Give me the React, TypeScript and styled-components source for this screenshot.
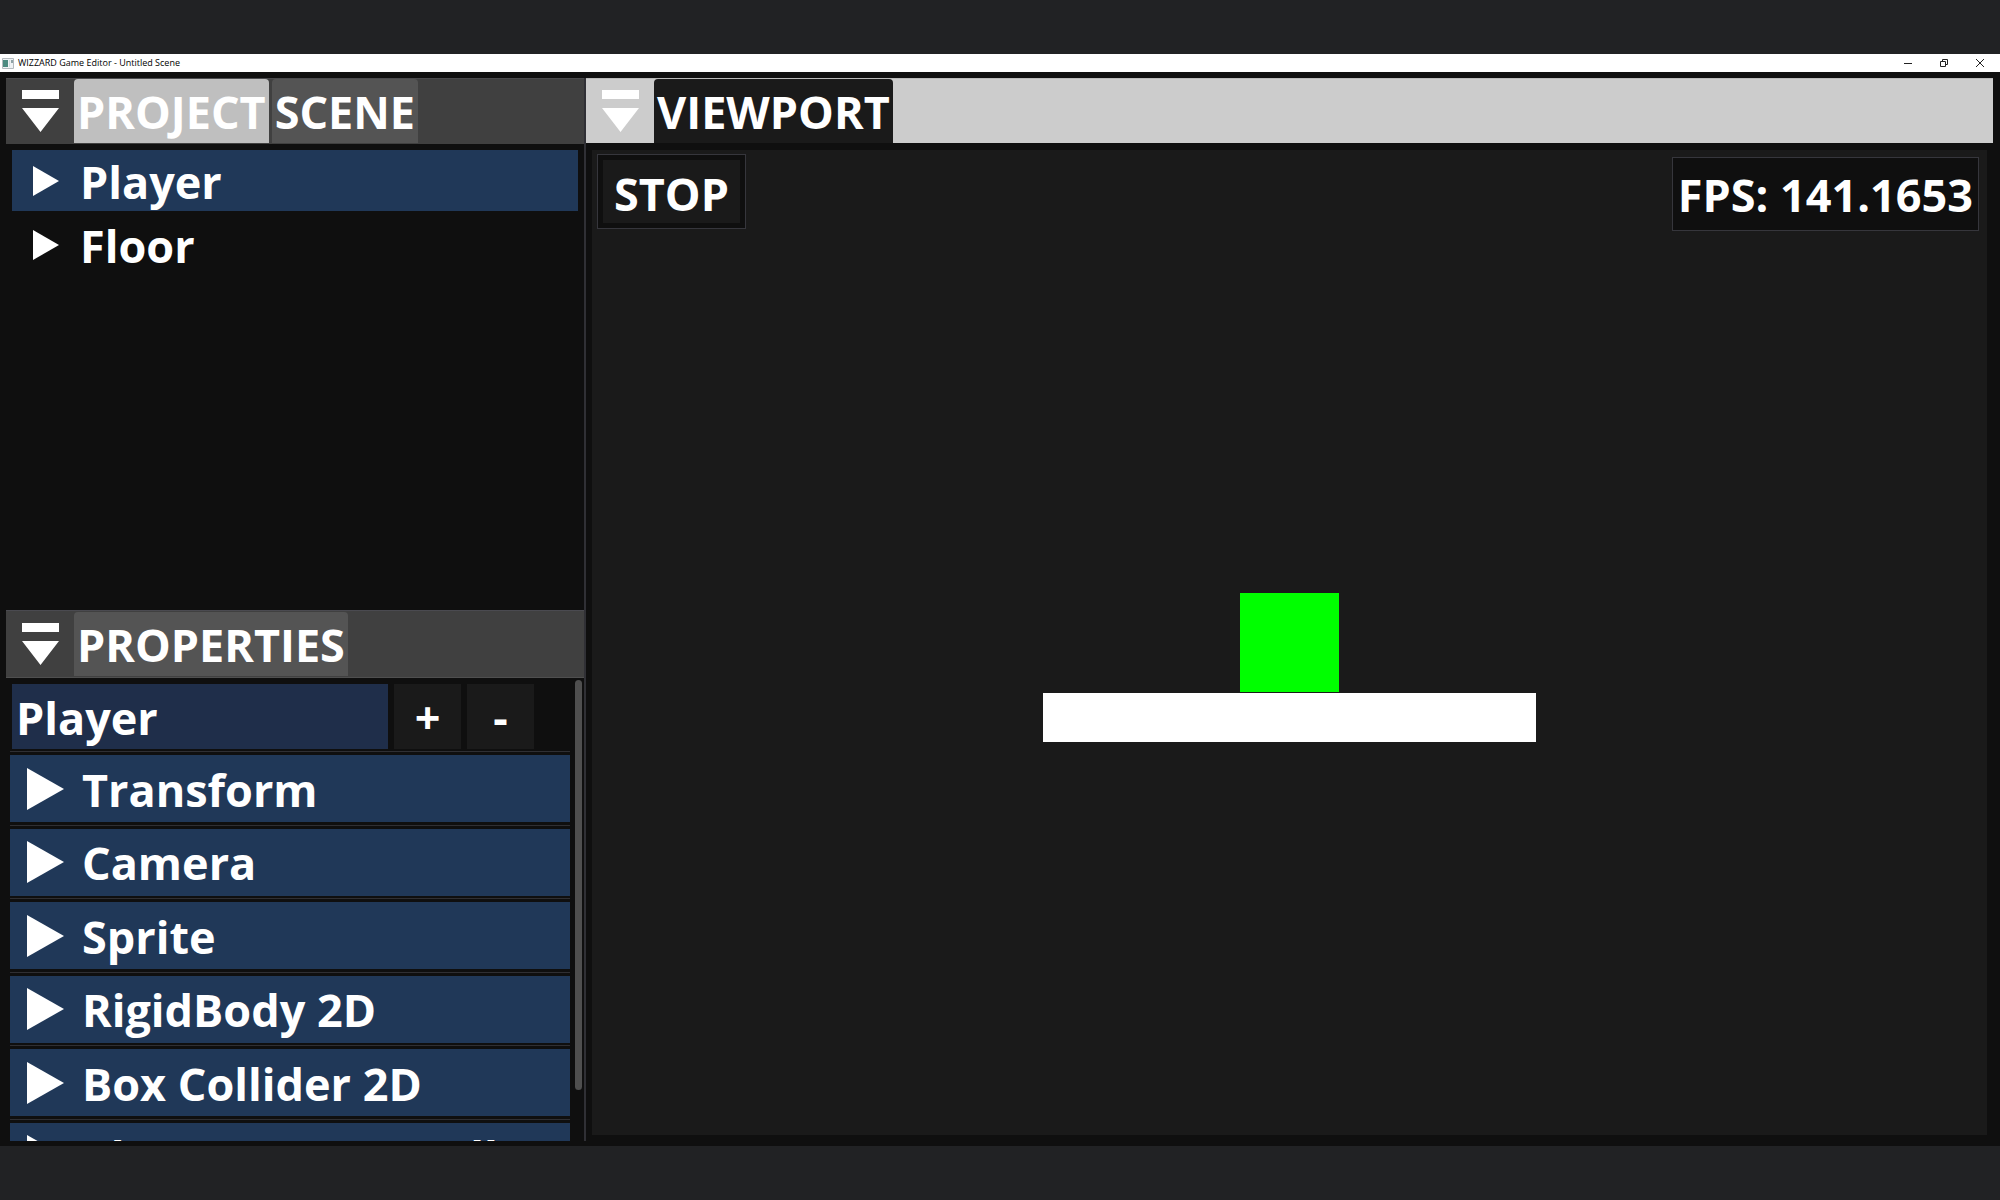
import React, { useState } from "react";
import styled, { createGlobalStyle, css } from "styled-components";

const GlobalStyle = createGlobalStyle`
  *, *::before, *::after { box-sizing: border-box; }
  body { margin: 0; background: #212224; }
  button, input { font: inherit; color: inherit; border: 0; border-radius: 0; padding: 0; margin: 0; background: none; }
`;

const Desktop = styled.div`
  display: flex;
  flex-direction: column;
  height: 100vh;
  padding: 54px 0;
  background: #212224;
  color: #fff;
  font: 700 45px/60px "Open Sans", "Noto Sans", sans-serif;
`;

const Window = styled.main`
  display: flex;
  flex: 1;
  flex-direction: column;
  min-height: 0;
  background: #0f0f0f;
`;

const TitleBar = styled.header`
  display: flex;
  align-items: center;
  height: 18px;
  padding: 0 10px 0 2px;
  gap: 4px;
  background: #fff;
  color: #000;
`;

const Title = styled.h1`
  flex: 1;
  margin: 0;
  font-size: 9px;
  font-weight: 400;
  line-height: 18px;
`;

const WindowButton = styled.button`
  display: flex;
  align-items: center;
  justify-content: center;
  width: 20px;
  height: 18px;
`;

const WindowButtons = styled.div`
  display: flex;
  gap: 16px;
`;

const Workspace = styled.div`
  display: grid;
  flex: 1;
  grid-template-columns: minmax(0, 580fr) minmax(0, 1407fr);
  min-height: 0;
  padding: 6px 7px 5px 6px;
`;

const Sidebar = styled.aside`
  display: grid;
  grid-template-rows: 532fr 531fr;
  min-height: 0;
  border-right: 2px solid #303035;
`;

const Panel = styled.section`
  display: flex;
  flex-direction: column;
  min-width: 0;
  min-height: 0;
`;

const barKinds = {
  dark: css`
    height: 66px;
    padding-bottom: 1px;
    border-top: 1px solid #4a4a4d;
    background: #404040;
  `,
  tall: css`
    height: 68px;
    padding-bottom: 1px;
    border-top: 1px solid #4a4a50;
    border-bottom: 1px solid #4f4f4f;
    background: #404040;
  `,
  light: css`
    height: 65px;
    border-top: 1px solid #b8b8b8;
    background: #cccccc;
  `,
};

const TabBar = styled.div<{ $kind: keyof typeof barKinds }>`
  display: flex;
  flex: none;
  align-items: flex-end;
  ${(p) => barKinds[p.$kind]}
`;

const MenuButton = styled.button`
  display: flex;
  align-items: center;
  width: 68px;
  height: 64px;
  padding-left: 16px;
`;

const tabColors = {
  selected: "#bfbfbf",
  idle: "#545454",
  dark: "#1a1a1a",
};

const Tab = styled.button<{ $tone: keyof typeof tabColors }>`
  height: 64px;
  margin-right: 3px;
  padding: 2px 3px 0;
  border-radius: 4px 4px 0 0;
  background: ${(p) => tabColors[p.$tone]};
  line-height: 62px;
`;

const Tree = styled.div`
  display: flex;
  flex-direction: column;
  gap: 3px;
  padding: 6px;
`;

const rowBase = css`
  display: flex;
  align-items: center;
  width: 100%;
  text-align: left;
`;

const RowLabel = styled.span`
  padding-top: 2px;
`;

const TreeRow = styled.button<{ $selected: boolean }>`
  ${rowBase}
  height: 61px;
  padding-left: 21px;
  gap: 21px;
  background: ${(p) => (p.$selected ? "#203858" : "transparent")};
`;

const PropertiesBody = styled.div`
  display: flex;
  flex: 1;
  min-height: 0;
  overflow: hidden;
`;

const PropertiesMain = styled.div`
  flex: 1;
  min-width: 0;
  padding: 6px 2px 0 4px;
`;

const NameRow = styled.div`
  display: flex;
  gap: 6px;
  padding: 0 36px 2px 2px;
`;

const NameInput = styled.input`
  flex: 1;
  min-width: 0;
  height: 65px;
  padding: 1px 4px 0;
  background: #1f2e4a;
  outline: none;
`;

const SmallButton = styled.button`
  width: 67px;
  height: 65px;
  padding-top: 1px;
  background: #1a1a1a;
`;

const ComponentList = styled.ul`
  display: grid;
  grid-template-rows: repeat(6, 1fr);
  height: 441px;
  margin: 0;
  padding: 0;
  list-style: none;
`;

const ComponentItem = styled.li`
  padding-top: 3px;
  border-top: 1px solid #2f2f33;
`;

const ComponentHeader = styled.button`
  ${rowBase}
  height: 67px;
  padding-left: 17px;
  gap: 18px;
  background: #203858;
`;

const ScrollTrack = styled.div`
  width: 12px;
  padding: 2px 2px 0 3px;
`;

const ScrollThumb = styled.div`
  width: 7px;
  height: 89%;
  border-radius: 4px;
  background: #4f4f4f;
`;

const Stage = styled.div`
  position: relative;
  flex: 1;
  margin: 7px 6px 6px;
  background: #1a1a1a;
`;

const overlaySides = {
  left: css`
    top: 4px;
    left: 5px;
    padding: 5px;
  `,
  right: css`
    top: 7px;
    right: 8px;
    padding: 7px 5px 5px;
  `,
};

const Overlay = styled.div<{ $side: keyof typeof overlaySides }>`
  position: absolute;
  border: 1px solid #36363c;
  background: #0f0f0f;
  ${(p) => overlaySides[p.$side]}
`;

const StopButton = styled.button`
  display: block;
  height: 63px;
  padding: 4px 11px 0;
  background: #1a1a1a;
`;

const Fps = styled.output`
  display: block;
`;

const Sprite = styled.div<{ $x: number; $y: number; $w: number; $h: number; $color: string }>`
  position: absolute;
  left: calc(50% + ${(p) => p.$x}px);
  top: calc(50% + ${(p) => p.$y}px);
  width: ${(p) => p.$w}px;
  height: ${(p) => p.$h}px;
  background: ${(p) => p.$color};
`;

const MenuIcon = () => (
  <svg width="37" height="42" viewBox="0 0 37 42" fill="#fff" aria-hidden="true">
    <path d="M0 0h37v9H0zM0 18h37L18.500 42z" />
  </svg>
);

const Arrow = ({ width, height }: { width: number; height: number }) => (
  <svg width={width} height={height} viewBox="0 0 26 30" preserveAspectRatio="none" fill="#fff" aria-hidden="true">
    <path d="M0 0l26 15L0 30z" />
  </svg>
);

const AppIcon = () => (
  <svg width="12" height="11" viewBox="0 0 12 11" aria-hidden="true">
    <path d="M.5.5h11v10H.5z" fill="#eef2f4" stroke="#b4babf" />
    <path d="M1 2h5v7H1z" fill="#4b8a80" />
    <path d="M7 2h1v7H7z" fill="#d3dce0" />
    <path d="M9 2h2v3H9z" fill="#8fa3a6" />
  </svg>
);

const MinimizeIcon = () => (
  <svg width="10" height="10" viewBox="0 0 10 10" stroke="#222" fill="none" aria-hidden="true">
    <path d="M1 5.500h8" />
  </svg>
);

const RestoreIcon = () => (
  <svg width="10" height="10" viewBox="0 0 10 10" stroke="#222" fill="none" aria-hidden="true">
    <path d="M1.500 3.500h5v5h-5zM3.500 3.500v-2h5v5h-2" />
  </svg>
);

const CloseIcon = () => (
  <svg width="10" height="10" viewBox="0 0 10 10" stroke="#222" fill="none" aria-hidden="true">
    <path d="M1 1l8 8M9 1L1 9" />
  </svg>
);

const entities = ["Player", "Floor"];
const components = ["Transform", "Camera", "Sprite", "RigidBody 2D", "Box Collider 2D", "Character Controller"];

export default function App() {
  const [selected, setSelected] = useState("Player");
  const [name, setName] = useState("Player");

  return (
    <Desktop>
      <GlobalStyle />
      <Window>
        <TitleBar>
          <AppIcon />
          <Title>WIZZARD Game Editor - Untitled Scene</Title>
          <WindowButtons>
            <WindowButton aria-label="Minimize"><MinimizeIcon /></WindowButton>
            <WindowButton aria-label="Restore"><RestoreIcon /></WindowButton>
            <WindowButton aria-label="Close"><CloseIcon /></WindowButton>
          </WindowButtons>
        </TitleBar>
        <Workspace>
          <Sidebar>
            <Panel>
              <TabBar $kind="dark">
                <MenuButton aria-label="Project panel menu"><MenuIcon /></MenuButton>
                <Tab $tone="selected">PROJECT</Tab>
                <Tab $tone="idle">SCENE</Tab>
              </TabBar>
              <Tree>
                {entities.map((entity) => (
                  <TreeRow key={entity} $selected={entity === selected} onClick={() => setSelected(entity)}>
                    <Arrow width={26} height={30} />
                    <RowLabel>{entity}</RowLabel>
                  </TreeRow>
                ))}
              </Tree>
            </Panel>
            <Panel>
              <TabBar $kind="tall">
                <MenuButton aria-label="Properties panel menu"><MenuIcon /></MenuButton>
                <Tab $tone="idle">PROPERTIES</Tab>
              </TabBar>
              <PropertiesBody>
                <PropertiesMain>
                  <NameRow>
                    <NameInput aria-label="Entity name" value={name} onChange={(e) => setName(e.target.value)} />
                    <SmallButton aria-label="Add component">+</SmallButton>
                    <SmallButton aria-label="Remove component">-</SmallButton>
                  </NameRow>
                  <ComponentList>
                    {components.map((component) => (
                      <ComponentItem key={component}>
                        <ComponentHeader>
                          <Arrow width={37} height={42} />
                          <RowLabel>{component}</RowLabel>
                        </ComponentHeader>
                      </ComponentItem>
                    ))}
                  </ComponentList>
                </PropertiesMain>
                <ScrollTrack><ScrollThumb /></ScrollTrack>
              </PropertiesBody>
            </Panel>
          </Sidebar>
          <Panel>
            <TabBar $kind="light">
              <MenuButton aria-label="Viewport panel menu"><MenuIcon /></MenuButton>
              <Tab $tone="dark">VIEWPORT</Tab>
            </TabBar>
            <Stage>
              <Sprite $x={-50} $y={-50} $w={99} $h={99} $color="#00ff00" />
              <Sprite $x={-247} $y={50} $w={493} $h={49} $color="#ffffff" />
              <Overlay $side="left"><StopButton>STOP</StopButton></Overlay>
              <Overlay $side="right"><Fps>FPS: 141.1653</Fps></Overlay>
            </Stage>
          </Panel>
        </Workspace>
      </Window>
    </Desktop>
  );
}
